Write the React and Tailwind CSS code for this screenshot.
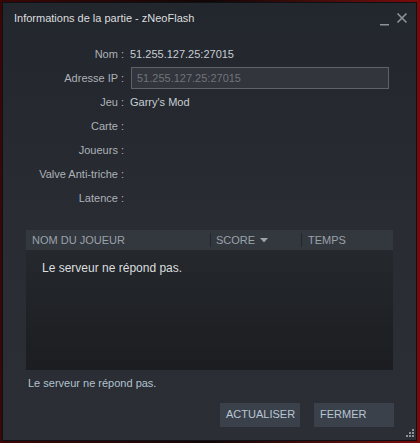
export default function App() {
  const rows = [
    ['Nom :', '51.255.127.25:27015'],
    ['Adresse IP :', null],
    ['Jeu :', "Garry's Mod"],
    ['Carte :', ''],
    ['Joueurs :', ''],
    ['Valve Anti-triche :', ''],
    ['Latence :', ''],
  ];

  return (
    <div
      className="w-[420px] h-[443px] p-[2px] pr-[3px] pb-[2px] bg-gradient-to-r from-[#3a0606] via-[#120606] to-[#7a0a0a]"
      style={{ fontFamily: '"Liberation Sans", Arial, sans-serif' }}
    >
      <div className="relative w-full h-full border border-[#0d1015] bg-gradient-to-b from-[#22262d] via-[#292c32] to-[#2b2e34] flex flex-col">
        {/* title bar */}
        <div className="flex items-center h-[30px] pl-[11px] pr-[8px]">
          <span className="text-[11px] text-[#dcdedf]">Informations de la partie - zNeoFlash</span>
          <div className="ml-auto flex items-center gap-[6px]">
            <svg width="11" height="11" viewBox="0 0 11 11" className="mt-[4px]">
              <rect x="1" y="9" width="9" height="1.5" fill="#8b929a" />
            </svg>
            <svg width="12" height="12" viewBox="0 0 12 12">
              <path d="M1.5 1.5 L10.5 10.5 M10.5 1.5 L1.5 10.5" stroke="#8b929a" strokeWidth="1.6" />
            </svg>
          </div>
        </div>

        {/* info rows */}
        <div className="flex flex-col pt-[9px]">
          {rows.map(([label, value]) => (
            <div key={label} className="flex items-center h-[24px]">
              <div className="w-[124px] text-right text-[11px] text-[#acb2b8] pr-[3px]">{label}</div>
              {value === null ? (
                <div className="ml-[4px] w-[258px] h-[22px] border border-[#5c626b] bg-[#32353b] flex items-center pl-[5px] text-[11px] text-[#6f747b]">
                  51.255.127.25:27015
                </div>
              ) : (
                <div className="pl-[3px] text-[11px] text-[#c6cdd3]">{value}</div>
              )}
            </div>
          ))}
        </div>

        {/* players table */}
        <div className="mx-[23px] mt-[20px] flex flex-col">
          <div className="flex items-center h-[20px] bg-[#33373e] text-[11px] text-[#9aa2aa]">
            <div className="w-[185px] pl-[6px] border-r border-[#24272c] h-[14px] flex items-center">NOM DU JOUEUR</div>
            <div className="w-[91px] pl-[5px] border-r border-[#24272c] h-[14px] flex items-center gap-[5px]">
              SCORE
              <svg width="8" height="5" viewBox="0 0 8 5">
                <path d="M0 0 L8 0 L4 4.5 Z" fill="#9aa2aa" />
              </svg>
            </div>
            <div className="pl-[6px] flex items-center">TEMPS</div>
          </div>
          <div className="h-[120px] bg-gradient-to-b from-[#25282d] to-[#1b1d20] pl-[16px] pt-[9px] text-[12px] leading-[18px] text-[#dcdedf]">
            Le serveur ne répond pas.
          </div>
        </div>

        <div className="mt-[5px] pl-[25px] text-[11px] text-[#b2c2d0]">Le serveur ne répond pas.</div>

        <div className="mt-[11px] flex justify-end gap-[14px] pr-[22px]">
          <button className="w-[80px] h-[24px] bg-[#3b414b] text-left pl-[6px] text-[11px] text-[#b8c6d3]">ACTUALISER</button>
          <button className="w-[80px] h-[24px] bg-[#3b414b] text-left pl-[6px] text-[11px] text-[#b8c6d3]">FERMER</button>
        </div>

        {/* resize grip */}
        <svg width="9" height="9" viewBox="0 0 9 9" className="absolute right-[2px] bottom-[2px]">
          <rect x="7" y="0" width="2" height="2" fill="#8b929a" />
          <rect x="4" y="3" width="2" height="2" fill="#8b929a" />
          <rect x="7" y="3" width="2" height="2" fill="#8b929a" />
          <rect x="1" y="6" width="2" height="2" fill="#8b929a" />
          <rect x="4" y="6" width="2" height="2" fill="#8b929a" />
          <rect x="7" y="6" width="2" height="2" fill="#8b929a" />
        </svg>
      </div>
    </div>
  );
}
